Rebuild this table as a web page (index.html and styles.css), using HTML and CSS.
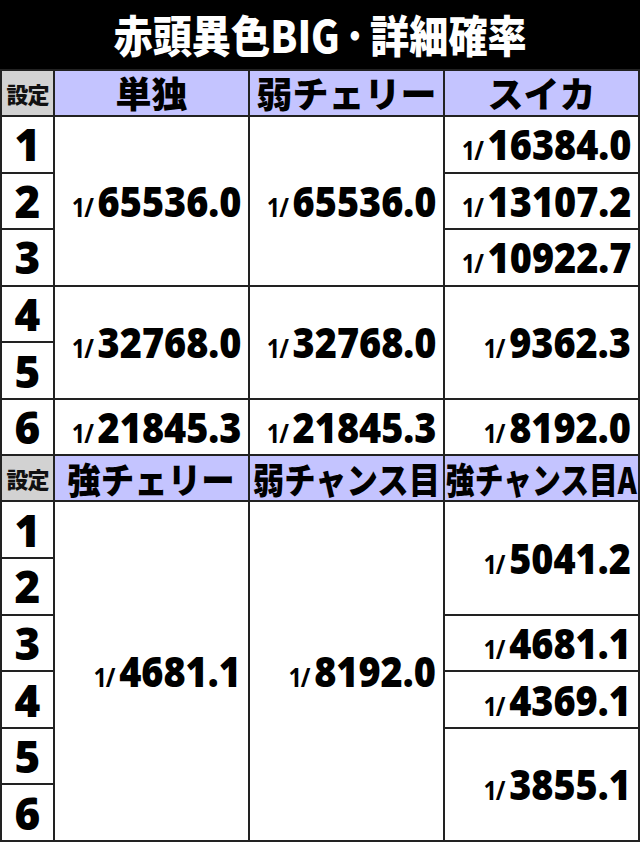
FILE: index.html
```html
<!DOCTYPE html>
<html lang="ja">
<head>
<meta charset="utf-8">
<title>赤頭異色BIG・詳細確率</title>
<link rel="stylesheet" href="styles.css">
</head>
<body>
<div class="page">
  <div class="title"><span class="title-text">赤頭異色BIG<span class="dot">・</span>詳細確率</span></div>
  <div class="grid">
    <div class="cell set-h">設定</div>
    <div class="cell h"><span class="ht">単独</span></div>
    <div class="cell h"><span class="ht">弱チェリー</span></div>
    <div class="cell h"><span class="ht">スイカ</span></div>

    <div class="cell n">1</div>
    <div class="cell v span3"><span class="val"><span class="f">1/</span><span class="num">65536.0</span></span></div>
    <div class="cell v span3"><span class="val"><span class="f">1/</span><span class="num">65536.0</span></span></div>
    <div class="cell v"><span class="val"><span class="f">1/</span><span class="num">16384.0</span></span></div>

    <div class="cell n">2</div>
    <div class="cell v"><span class="val"><span class="f">1/</span><span class="num">13107.2</span></span></div>

    <div class="cell n">3</div>
    <div class="cell v"><span class="val"><span class="f">1/</span><span class="num">10922.7</span></span></div>

    <div class="cell n">4</div>
    <div class="cell v span2"><span class="val"><span class="f">1/</span><span class="num">32768.0</span></span></div>
    <div class="cell v span2"><span class="val"><span class="f">1/</span><span class="num">32768.0</span></span></div>
    <div class="cell v span2"><span class="val"><span class="f">1/</span><span class="num">9362.3</span></span></div>

    <div class="cell n">5</div>

    <div class="cell n">6</div>
    <div class="cell v"><span class="val"><span class="f">1/</span><span class="num">21845.3</span></span></div>
    <div class="cell v"><span class="val"><span class="f">1/</span><span class="num">21845.3</span></span></div>
    <div class="cell v"><span class="val"><span class="f">1/</span><span class="num">8192.0</span></span></div>

    <div class="cell set-h">設定</div>
    <div class="cell h"><span class="ht ht2">強チェリー</span></div>
    <div class="cell h"><span class="ht ht3">弱チャンス目</span></div>
    <div class="cell h"><span class="ht ht4">強チャンス目A</span></div>

    <div class="cell n">1</div>
    <div class="cell v span6"><span class="val"><span class="f">1/</span><span class="num">4681.1</span></span></div>
    <div class="cell v span6"><span class="val"><span class="f">1/</span><span class="num">8192.0</span></span></div>
    <div class="cell v span2"><span class="val"><span class="f">1/</span><span class="num">5041.2</span></span></div>

    <div class="cell n">2</div>

    <div class="cell n">3</div>
    <div class="cell v"><span class="val"><span class="f">1/</span><span class="num">4681.1</span></span></div>

    <div class="cell n">4</div>
    <div class="cell v"><span class="val"><span class="f">1/</span><span class="num">4369.1</span></span></div>

    <div class="cell n">5</div>
    <div class="cell v span2"><span class="val"><span class="f">1/</span><span class="num">3855.1</span></span></div>

    <div class="cell n">6</div>
  </div>
</div>
</body>
</html>
```

FILE: styles.css
```css
html, body {
  margin: 0;
  padding: 0;
  background: #000;
}

.page {
  width: 640px;
  height: 842px;
  overflow: hidden;
  background: #000;
  display: flex;
  flex-direction: column;
}

.title {
  height: 69px;
  flex: 0 0 69px;
  display: flex;
  align-items: center;
  justify-content: center;
  color: #fff;
  font-family: "Noto Sans CJK JP", "Noto Sans", sans-serif;
  font-weight: 900;
  font-size: 44px;
  line-height: 1.2;
}

.title-text {
  display: inline-block;
  transform: scaleX(0.89);
  white-space: nowrap;
}

.dot {
  font-size: 34px;
  vertical-align: 4px;
}

.grid {
  flex: 1 1 auto;
  display: grid;
  grid-template-columns: 51px 1fr 1fr 1fr;
  grid-template-rows: 44px repeat(6, 1fr) 44px repeat(6, 1fr);
  gap: 2px;
  padding: 2px;
  background: #222;
}

.cell {
  background: #fff;
  display: flex;
  align-items: center;
  min-width: 0;
  min-height: 0;
}

.set-h {
  background: #d2d2d2;
  justify-content: center;
  font-family: "Noto Sans CJK JP", sans-serif;
  font-weight: 900;
  font-size: 22px;
  letter-spacing: -1px;
  color: #111;
}

.h {
  background: #c4c4ff;
  justify-content: center;
  font-family: "Noto Sans CJK JP", sans-serif;
  font-weight: 900;
  font-size: 36px;
  line-height: 1.2;
  color: #000;
}

.ht {
  display: inline-block;
  white-space: nowrap;
}

.ht2 {
  transform: scaleX(0.93);
}

.ht3 {
  transform: scaleX(0.87);
}

.ht4 {
  transform: scaleX(0.8);
}

.n {
  justify-content: center;
  font-family: "Open Sans", "Noto Sans", sans-serif;
  font-weight: 800;
  font-size: 44px;
  line-height: 1;
  color: #000;
}

.v {
  justify-content: flex-end;
  align-items: center;
  padding-right: 7px;
  font-family: "Open Sans", "Noto Sans", sans-serif;
  font-weight: 800;
  color: #000;
  line-height: 1;
  white-space: nowrap;
}

.val {
  display: inline-flex;
  align-items: baseline;
  transform: scaleX(0.9);
  transform-origin: right center;
}

.f {
  font-size: 26px;
  font-weight: 700;
  margin-right: 5px;
  letter-spacing: -1px;
}

.num {
  font-size: 42px;
}

.span2 {
  grid-row: span 2;
}

.span3 {
  grid-row: span 3;
}

.span6 {
  grid-row: span 6;
}
```
